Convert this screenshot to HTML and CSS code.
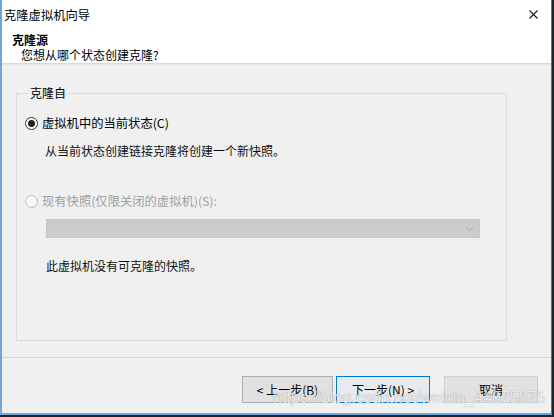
FILE: index.html
```html
<!DOCTYPE html>
<html lang="zh-CN">
<head>
<meta charset="utf-8">
<title>克隆虚拟机向导</title>
<link rel="stylesheet" href="styles.css">
</head>
<body>
<div class="window">
  <div class="titlebar">
    <span class="title">克隆虚拟机向导</span>
    <svg class="close" width="9" height="9" viewBox="0 0 9 9"><path d="M0.5 0.5 L8.5 8.5 M8.5 0.5 L0.5 8.5" stroke="#1a1a1a" stroke-width="1.1" fill="none"/></svg>
  </div>
  <div class="header">
    <div class="h-title">克隆源</div>
    <div class="h-sub">您想从哪个状态创建克隆?</div>
  </div>
  <div class="content">
    <div class="group">
      <div class="group-title">克隆自</div>
      <div class="radio-row radio-first">
        <span class="radio checked"></span>
        <span class="radio-label">虚拟机中的当前状态(C)</span>
      </div>
      <div class="desc">从当前状态创建链接克隆将创建一个新快照。</div>
      <div class="radio-row radio-second disabled">
        <span class="radio"></span>
        <span class="radio-label">现有快照(仅限关闭的虚拟机)(S):</span>
      </div>
      <div class="combo">
        <svg class="chev" width="9" height="5" viewBox="0 0 9 5"><path d="M0.5 0.5 L4.5 4.5 L8.5 0.5" stroke="#a8a8a8" stroke-width="1" fill="none"/></svg>
      </div>
      <div class="note">此虚拟机没有可克隆的快照。</div>
    </div>
  </div>
  <div class="footer">
    <button class="btn btn-prev">&lt; 上一步(B)</button>
    <button class="btn btn-next">下一步(N) &gt;</button>
    <button class="btn btn-cancel">取消</button>
  </div>
</div>
<div class="watermark">https://blog.csdn.net/weixin_44075875</div>
</body>
</html>
```

FILE: styles.css
```css
* { box-sizing: border-box; }

html, body {
  margin: 0;
  padding: 0;
}

body {
  width: 554px;
  height: 417px;
  overflow: hidden;
  background: #1c2630;
  font-family: "Noto Sans CJK SC", "Noto Sans", sans-serif;
  font-size: 12px;
  color: #000;
  position: relative;
}

.window {
  width: 552px;
  height: 415px;
  border-left: 2px solid #6ea6de;
  border-right: 1px solid #2a7fd3;
  border-bottom: 2px solid #6ea6de;
  display: flex;
  flex-direction: column;
  background: #fff;
}

.titlebar {
  height: 30px;
  display: flex;
  justify-content: space-between;
  align-items: center;
  padding-left: 2px;
  padding-right: 13px;
  background: #fff;
}

.title {
  line-height: 30px;
  font-size: 12.3px;
}

.close {
  display: block;
  margin-top: -1px;
}

.header {
  height: 34px;
  padding-left: 10px;
  padding-top: 2px;
  background: #fff;
  border-bottom: 1px solid #d9d9d9;
}

.h-title {
  font-weight: bold;
  line-height: 15px;
}

.h-sub {
  line-height: 15px;
  padding-left: 9px;
}

.content {
  height: 293px;
  background: #f0f0f0;
  border-top: 1px solid #e6e6e6;
  padding-left: 14px;
  padding-right: 44px;
  padding-top: 28px;
}

.group {
  height: 248px;
  border: 1px solid #dcdcdc;
  padding-left: 8px;
}

.group-title {
  margin-top: -8px;
  margin-left: 4px;
  width: fit-content;
  padding: 0 1px;
  line-height: 14px;
  background: #f0f0f0;
}

.radio-row {
  display: flex;
  align-items: center;
  height: 16px;
  gap: 4px;
}

.radio-first { margin-top: 15px; }
.radio-second { margin-top: 34px; }

.radio {
  width: 13px;
  height: 13px;
  border-radius: 50%;
  border: 1px solid #333;
  background: #fff;
  display: flex;
  align-items: center;
  justify-content: center;
}

.radio.checked::after {
  content: "";
  width: 7px;
  height: 7px;
  border-radius: 50%;
  background: #222;
}

.disabled .radio {
  border-color: #bcbcbc;
  background: #f7f7f7;
}

.disabled .radio-label {
  color: #a0a0a0;
}

.radio-label {
  line-height: 16px;
  font-size: 12.3px;
}

.desc {
  margin-top: 12px;
  margin-left: 20px;
  line-height: 16px;
  color: #111;
}

.combo {
  margin-top: 10px;
  margin-left: 21px;
  width: 434px;
  height: 19px;
  background: #cccccc;
  border: 1px solid #c6c6c6;
  display: flex;
  justify-content: flex-end;
  align-items: center;
  padding-right: 5px;
}

.chev { display: block; }

.note {
  margin-top: 20px;
  margin-left: 21px;
  line-height: 16px;
  color: #111;
}

.footer {
  height: 56px;
  background: #f0f0f0;
  border-top: 1px solid #d6d6d6;
  display: flex;
  justify-content: flex-end;
  align-items: flex-start;
  padding-top: 18px;
  padding-right: 13px;
}

.btn {
  height: 27px;
  font-family: "Noto Sans CJK SC", "Noto Sans", sans-serif;
  font-size: 12px;
  color: #000;
  background: #e1e1e1;
  border: 1px solid #adadad;
  padding: 0;
  margin: 0;
  line-height: 25px;
}

.btn-prev { width: 91px; }

.btn-next {
  width: 94px;
  margin-left: 3px;
  border-color: #0078d7;
  background: #e7ebef;
}

.btn-cancel {
  width: 94px;
  margin-left: 14px;
  border-color: #cfcfcf;
}

.watermark {
  position: absolute;
  left: 273px;
  top: 389px;
  font-family: "Liberation Sans", Arial, sans-serif;
  font-size: 16px;
  line-height: 18px;
  color: rgba(255, 255, 255, 0.85);
  text-shadow: 0 0 1px rgba(0, 0, 0, 0.45);
  white-space: nowrap;
  pointer-events: none;
}
```
